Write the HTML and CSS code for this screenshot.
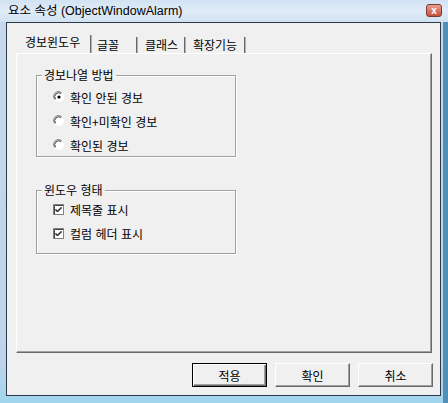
FILE: index.html
```html
<!DOCTYPE html>
<html lang="ko">
<head>
    <meta charset="UTF-8">
    <link rel="stylesheet" href="styles.css">
    <title>요소 속성</title>
</head>
<body>

<div class="window">
    <div class="titlebar">
        <span class="title">요소 속성 (ObjectWindowAlarm)</span>
        <span class="closeBox">x</span>
    </div>

    <div class="client">
        <div class="tabs">
            <div class="tab active tab1">경보윈도우</div>
            <div class="tab tab2">글꼴</div>
            <div class="tab tab3">클래스</div>
            <div class="tab tab4">확장기능</div>
        </div>

        <div class="panel">
            <div class="group groupList">
                <span class="groupTitle">경보나열 방법</span>
                <div class="option">
                    <svg class="radio" width="12" height="12" viewBox="0 0 12 12">
                        <circle cx="6" cy="6" r="5" fill="#fff"/>
                        <path d="M1.5 8.5 A5 5 0 0 1 8.5 1.5" fill="none" stroke="#7f7f7f" stroke-width="1"/>
                        <path d="M2.6 8.2 A4 4 0 0 1 8.2 2.6" fill="none" stroke="#404040" stroke-width="1"/>
                        <circle cx="6" cy="6" r="1.6" fill="#000"/>
                    </svg>
                    <span>확인 안된 경보</span>
                </div>
                <div class="option">
                    <svg class="radio" width="12" height="12" viewBox="0 0 12 12">
                        <circle cx="6" cy="6" r="5" fill="#fff"/>
                        <path d="M1.5 8.5 A5 5 0 0 1 8.5 1.5" fill="none" stroke="#7f7f7f" stroke-width="1"/>
                        <path d="M2.6 8.2 A4 4 0 0 1 8.2 2.6" fill="none" stroke="#404040" stroke-width="1"/>
                    </svg>
                    <span>확인+미확인 경보</span>
                </div>
                <div class="option">
                    <svg class="radio" width="12" height="12" viewBox="0 0 12 12">
                        <circle cx="6" cy="6" r="5" fill="#fff"/>
                        <path d="M1.5 8.5 A5 5 0 0 1 8.5 1.5" fill="none" stroke="#7f7f7f" stroke-width="1"/>
                        <path d="M2.6 8.2 A4 4 0 0 1 8.2 2.6" fill="none" stroke="#404040" stroke-width="1"/>
                    </svg>
                    <span>확인된 경보</span>
                </div>
            </div>

            <div class="group groupView">
                <span class="groupTitle">윈도우 형태</span>
                <div class="option">
                    <svg class="check" width="11" height="11" viewBox="0 0 11 11">
                        <rect x="0.5" y="0.5" width="10" height="10" fill="#fff" stroke="#808080"/>
                        <path d="M1.5 10 V1.5 H10" fill="none" stroke="#404040"/>
                        <path d="M2.5 5 L4.5 7 L8.5 3 M2.5 6 L4.5 8 L8.5 4" fill="none" stroke="#000" stroke-width="1"/>
                    </svg>
                    <span>제목줄 표시</span>
                </div>
                <div class="option">
                    <svg class="check" width="11" height="11" viewBox="0 0 11 11">
                        <rect x="0.5" y="0.5" width="10" height="10" fill="#fff" stroke="#808080"/>
                        <path d="M1.5 10 V1.5 H10" fill="none" stroke="#404040"/>
                        <path d="M2.5 5 L4.5 7 L8.5 3 M2.5 6 L4.5 8 L8.5 4" fill="none" stroke="#000" stroke-width="1"/>
                    </svg>
                    <span>컬럼 헤더 표시</span>
                </div>
            </div>
        </div>

        <div class="buttons">
            <button class="btn default">적용</button>
            <button class="btn">확인</button>
            <button class="btn">취소</button>
        </div>
    </div>
</div>

</body>
</html>
```

FILE: styles.css
```css
body {
    margin: 0;
    width: 448px;
    height: 403px;
    overflow: hidden;
    font-family: "Noto Sans CJK KR", "Liberation Sans", sans-serif;
    font-size: 12px;
    color: #000;
}

.window {
    width: 448px;
    height: 403px;
    box-sizing: border-box;
    padding: 0 7px 7px 6px;
    background: linear-gradient(to bottom, #c6d9ed, #bfd4ea 90%, #9fd6ee);
    box-shadow: inset -5px 0 0 #4f8fb8;
}

.titlebar {
    height: 22px;
    display: flex;
    align-items: center;
    justify-content: space-between;
    margin: 0 -7px 0 -6px;
    padding: 0 6px 0 8px;
    background: linear-gradient(to bottom, #d3e3f3, #dfebf7 50%, #d2e2f2);
}

.title {
    font-family: "Liberation Sans", "Noto Sans CJK KR", sans-serif;
    font-size: 12.5px;
    line-height: 14px;
}

.closeBox {
    width: 16px;
    height: 13px;
    margin-top: -2px;
    border: 1px solid #7a3a30;
    border-radius: 3px;
    background: linear-gradient(to bottom, #e8a090, #c8503c);
    color: #fff;
    font-family: "Liberation Sans", sans-serif;
    font-weight: bold;
    font-size: 10px;
    line-height: 12px;
    text-align: center;
    box-sizing: border-box;
}

.client {
    height: 374px;
    box-sizing: border-box;
    border: 1px solid #2c3a4a;
    background-color: #f0f0f0;
    padding-top: 10px;
}

.tabs {
    display: flex;
    height: 20px;
    margin-left: 11px;
}

.tab {
    box-sizing: border-box;
    padding: 1px 0 0 7px;
    line-height: 14px;
    border-right: 1px solid #6a6a6a;
    box-shadow: 1px 0 0 #b0b0b0;
    height: 16px;
    margin-top: 4px;
}

.tab.active {
    margin-top: 2px;
    height: 18px;
    padding-top: 0;
}

.tab1 { width: 73px; }
.tab2 { width: 46px; padding-left: 6px; }
.tab3 { width: 48px; padding-left: 8px; }
.tab4 { width: 60px; padding-left: 8px; }

.panel {
    height: 300px;
    margin: 0 8px 0 9px;
    box-sizing: border-box;
    border: 1px solid;
    border-color: #fff #696969 #696969 #fff;
    box-shadow: inset -1px -1px 0 #a0a0a0;
    padding-top: 21px;
}

.group {
    display: flex;
    flex-direction: column;
    gap: 8px;
    width: 200px;
    box-sizing: border-box;
    margin-left: 19px;
    border: 1px solid #a0a0a0;
    box-shadow: inset 1px 1px 0 #fff, 1px 1px 0 #fff;
}

.groupList {
    height: 82px;
}

.groupView {
    height: 64px;
    margin-top: 33px;
}

.groupTitle {
    align-self: flex-start;
    margin: -8px 0 0 5px;
    padding: 0 2px;
    line-height: 14px;
    background-color: #f0f0f0;
}

.groupList .groupTitle {
    margin-bottom: -1px;
}

.groupView .groupTitle {
    margin-bottom: -4px;
}

.option {
    display: flex;
    align-items: center;
    height: 16px;
    margin-left: 16px;
}

.radio {
    margin-right: 5px;
}

.check {
    margin-right: 6px;
}

.buttons {
    display: flex;
    justify-content: flex-end;
    gap: 8px;
    margin: 10px 7px 0 0;
}

.btn {
    width: 75px;
    height: 24px;
    padding: 0;
    font-family: "Noto Sans CJK KR", sans-serif;
    font-size: 12px;
    background-color: #f0f0f0;
    border: 1px solid;
    border-color: #fff #696969 #696969 #fff;
    box-shadow: inset -1px -1px 0 #a0a0a0;
}

.btn.default {
    border: 1px solid #000;
    box-shadow: inset 1px 1px 0 #fff, inset -1px -1px 0 #696969, inset -2px -2px 0 #a0a0a0;
}
```
